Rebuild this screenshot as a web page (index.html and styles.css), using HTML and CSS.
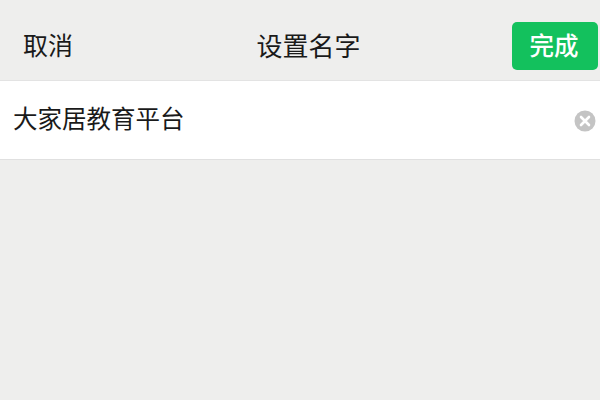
FILE: index.html
```html
<!DOCTYPE html>
<html lang="zh-CN">
<head>
<meta charset="utf-8">
<title>设置名字</title>
<link rel="stylesheet" href="styles.css">
</head>
<body>
<header class="nav">
  <span class="cancel">取消</span>
  <h1 class="title">设置名字</h1>
  <span class="done">完成</span>
</header>
<section class="field">
  <span class="value">大家居教育平台</span>
  <svg class="clear" viewBox="0 0 22 22" width="22" height="22" aria-hidden="true">
    <circle cx="11" cy="11" r="10.5" fill="#c4c4c4"/>
    <path d="M7 7l8 8M15 7l-8 8" stroke="#fff" stroke-width="2.6" stroke-linecap="round"/>
  </svg>
</section>
</body>
</html>
```
FILE: styles.css
```css
html, body {
  margin: 0;
  padding: 0;
}
body {
  width: 600px;
  height: 400px;
  overflow: hidden;
  background: #eeeeed;
  color: #1a1a1a;
  font-family: "Noto Sans CJK SC", "Liberation Sans", sans-serif;
}
.nav {
  height: 80px;
  box-sizing: border-box;
  padding: 22px 2px 10px 23px;
  display: grid;
  grid-template-columns: 1fr auto 1fr;
  align-items: start;
}
.cancel {
  font-size: 25px;
  line-height: 45px;
  justify-self: start;
}
.title {
  margin: 0;
  font-size: 26px;
  font-weight: 400;
  line-height: 45px;
  transform: translateX(-2px);
}
.done {
  justify-self: end;
  width: 86px;
  height: 48px;
  box-sizing: border-box;
  padding-right: 2px;
  border-radius: 5px;
  background: #13c15d;
  color: #fff;
  font-size: 24.5px;
  font-weight: 500;
  line-height: 45px;
  text-align: center;
}
.field {
  height: 80px;
  box-sizing: border-box;
  padding: 0 4px 0 13px;
  display: flex;
  align-items: center;
  justify-content: space-between;
  background: #fff;
  border-top: 1px solid #e3e3e3;
  border-bottom: 1px solid #e0e0e0;
}
.value {
  font-size: 24.5px;
  line-height: 34px;
  padding-bottom: 4px;
}
.clear {
  display: block;
  margin-top: 1px;
}
```
